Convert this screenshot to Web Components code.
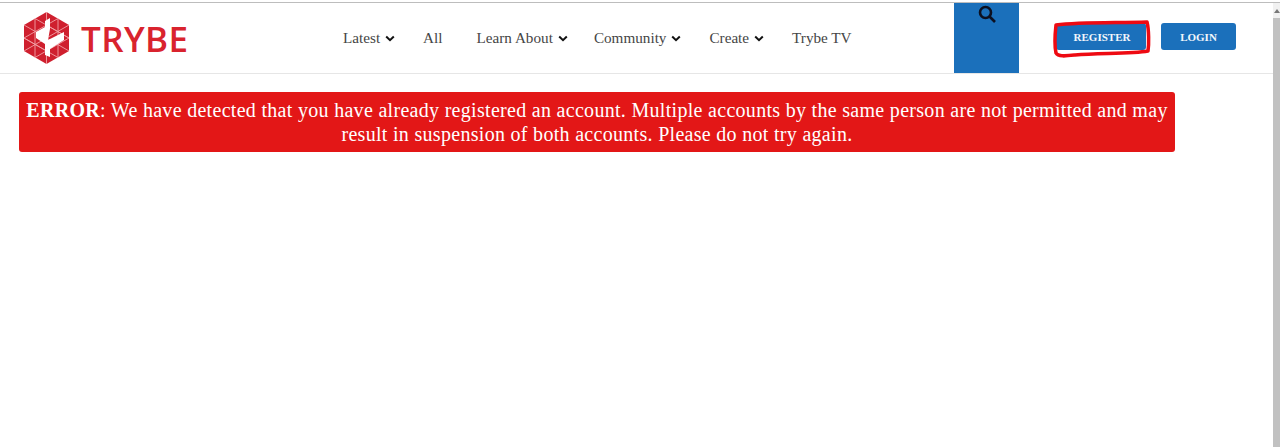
<!DOCTYPE html>
<html>
<head>
<meta charset="utf-8">
<style>
  html, body { margin:0; padding:0; height:100%; background:#fff; overflow:hidden; }
  body { font-family:"Liberation Serif", serif; display:flex; flex-direction:column; position:relative; }
</style>
</head>
<body>
<site-page>
  <site-header></site-header>
  <error-alert><b>ERROR</b>: We have detected that you have already registered an account. Multiple accounts by the same person are not permitted and may result in suspension of both accounts. Please do not try again.</error-alert>
</site-page>
<fake-scrollbar></fake-scrollbar>

<script>
class TrybeLogo extends HTMLElement {
	constructor() {
		super()
		this.attachShadow({ mode: 'open' })
	}

	connectedCallback() {
		this.shadowRoot.innerHTML = `
      <style>
        :host { display:flex; align-items:center; gap:12px; }
        svg { width:45px; height:52px; display:block; flex:none; }
        .word {
          font-family:"Open Sans", sans-serif;
          font-weight:600;
          font-size:35px;
          line-height:1;
          letter-spacing:.4px;
          color:#d9232e;
        }
      </style>
      <svg viewBox="0 0 45 52" aria-hidden="true">
        <path d="M22.500 0L45 13V39L22.500 52L0 39V13Z" fill="#cf1f2e"></path>
        <path d="M0 13L45 39M0 26L22.500 39M22.500 13L45 26M11 6.500L45 26M34 6.500L0 26M45 13L0 39M45 26L11 45.500M0 26L34 45.500M11 6.500V45.500M22.500 0V52M34 6.500V45.500" stroke="#f2a0a6" stroke-width=".9" fill="none"></path>
        <path d="M21 9L26 6V17L24 28L40 20V28L26 37V45L21 43V32L12 26V20L21 15Z" fill="#fff"></path>
      </svg>
      <span class="word">TRYBE</span>
    `
	}
}

class NavItem extends HTMLElement {
	constructor() {
		super()
		this.attachShadow({ mode: 'open' })
	}

	connectedCallback() {
		const caret = this.hasAttribute('caret')
			? `<svg viewBox="0 0 10 7" aria-hidden="true"><path d="M1.200 1.500L5 5.200L8.800 1.500"></path></svg>`
			: ''
		this.shadowRoot.innerHTML = `
      <style>
        :host { display:flex; align-items:center; gap:5px; color:#454545; font-size:15.200px; white-space:nowrap; }
        svg { width:10px; height:7px; margin-top:2px; fill:none; stroke:#111; stroke-width:2; }
      </style>
      <slot></slot>${caret}
    `
	}
}

class SiteHeader extends HTMLElement {
	constructor() {
		super()
		this.attachShadow({ mode: 'open' })
	}

	connectedCallback() {
		this.shadowRoot.innerHTML = `
      <style>
        :host {
          display:flex;
          height:70px;
          border-top:1px solid #bdbdbd;
          border-bottom:1px solid #e6e6e6;
          margin-top:2px;
          padding-left:24px;
          align-items:stretch;
        }
        trybe-logo { width:319px; flex:none; }
        nav { display:flex; align-items:center; gap:27px; width:611px; flex:none; padding-bottom:1px; box-sizing:border-box; }
        .latest { margin-right:1px; }
        .all { margin-right:7px; }
        .learn { margin-right:-1px; }
        .community { margin-right:1px; }
        .create { margin-right:1px; }
        .search {
          width:65px;
          flex:none;
          background:#1b70bb;
          display:flex;
          justify-content:center;
          align-items:flex-start;
        }
        .search svg { width:18px; height:18px; margin-top:2px; fill:none; stroke:#0c1020; stroke-width:2.600; }
        .actions { display:flex; align-items:center; gap:15px; margin-left:37px; padding-bottom:3px; }
        .btn {
          height:27px;
          display:flex;
          align-items:center;
          justify-content:center;
          background:#1b70bb;
          color:#f2f7fb;
          border-radius:3px;
          font-weight:700;
          font-size:11px;
        }
        .reg { width:90px; padding-left:2px; box-sizing:border-box; }
        .log { width:75px; }
      </style>
      <trybe-logo></trybe-logo>
      <nav>
        <nav-item class="latest" caret>Latest</nav-item>
        <nav-item class="all">All</nav-item>
        <nav-item class="learn" caret>Learn About</nav-item>
        <nav-item class="community" caret>Community</nav-item>
        <nav-item class="create" caret>Create</nav-item>
        <nav-item>Trybe TV</nav-item>
      </nav>
      <div class="search">
        <svg viewBox="0 0 18 18" aria-hidden="true"><circle cx="7.500" cy="7.500" r="5.500"></circle><path d="M11.500 11.500L17 17"></path></svg>
      </div>
      <div class="actions">
        <div class="btn reg">REGISTER</div>
        <div class="btn log">LOGIN</div>
      </div>
    `
	}
}

class ErrorAlert extends HTMLElement {
	constructor() {
		super()
		this.attachShadow({ mode: 'open' })
	}

	connectedCallback() {
		this.shadowRoot.innerHTML = `
      <style>
        :host {
          display:block;
          width:1156px;
          box-sizing:border-box;
          margin:18px 0 0 19px;
          padding:6px 4px;
          background:#e31717;
          color:#fff;
          border-radius:3px;
          font-size:20px;
          line-height:24px;
          text-align:center;
          letter-spacing:.3px;
        }
      </style>
      <slot></slot>
    `
	}
}

class FakeScrollbar extends HTMLElement {
	constructor() {
		super()
		this.attachShadow({ mode: 'open' })
	}

	connectedCallback() {
		this.shadowRoot.innerHTML = `
      <style>
        :host { position:absolute; top:3px; right:0; height:444px; width:7px; background:#f1f1f1; display:block; }
        .arrow { position:absolute; top:6px; left:1px; border:3px solid transparent; border-top:0; border-bottom:4px solid #777; }
        .thumb { position:absolute; top:15px; left:0; width:7px; height:429px; background:#c1c1c1; }
      </style>
      <div class="arrow"></div>
      <div class="thumb"></div>
    `
	}
}

class SitePage extends HTMLElement {
	constructor() {
		super()
		this.attachShadow({ mode: 'open' })
	}

	connectedCallback() {
		// the red marker ring someone drew round the register button
		this.shadowRoot.innerHTML = `
      <style>
        :host { display:block; position:relative; height:100%; }
        svg { position:absolute; left:1050px; top:18px; width:102px; height:42px; fill:none; stroke:#ee0a12; stroke-width:3.500; stroke-linejoin:round; stroke-linecap:round; }
      </style>
      <slot></slot>
      <svg viewBox="0 0 102 42" aria-hidden="true">
        <path d="M6 7C30 4 66 5 97 4C99 12 99 26 98 33C82 36 50 35 25 37C16 38 8 39 6 35C4 26 5 16 6 7Z"></path>
      </svg>
    `
	}
}

customElements.define('trybe-logo', TrybeLogo)
customElements.define('nav-item', NavItem)
customElements.define('site-header', SiteHeader)
customElements.define('error-alert', ErrorAlert)
customElements.define('fake-scrollbar', FakeScrollbar)
customElements.define('site-page', SitePage)
</script>
</body>
</html>
